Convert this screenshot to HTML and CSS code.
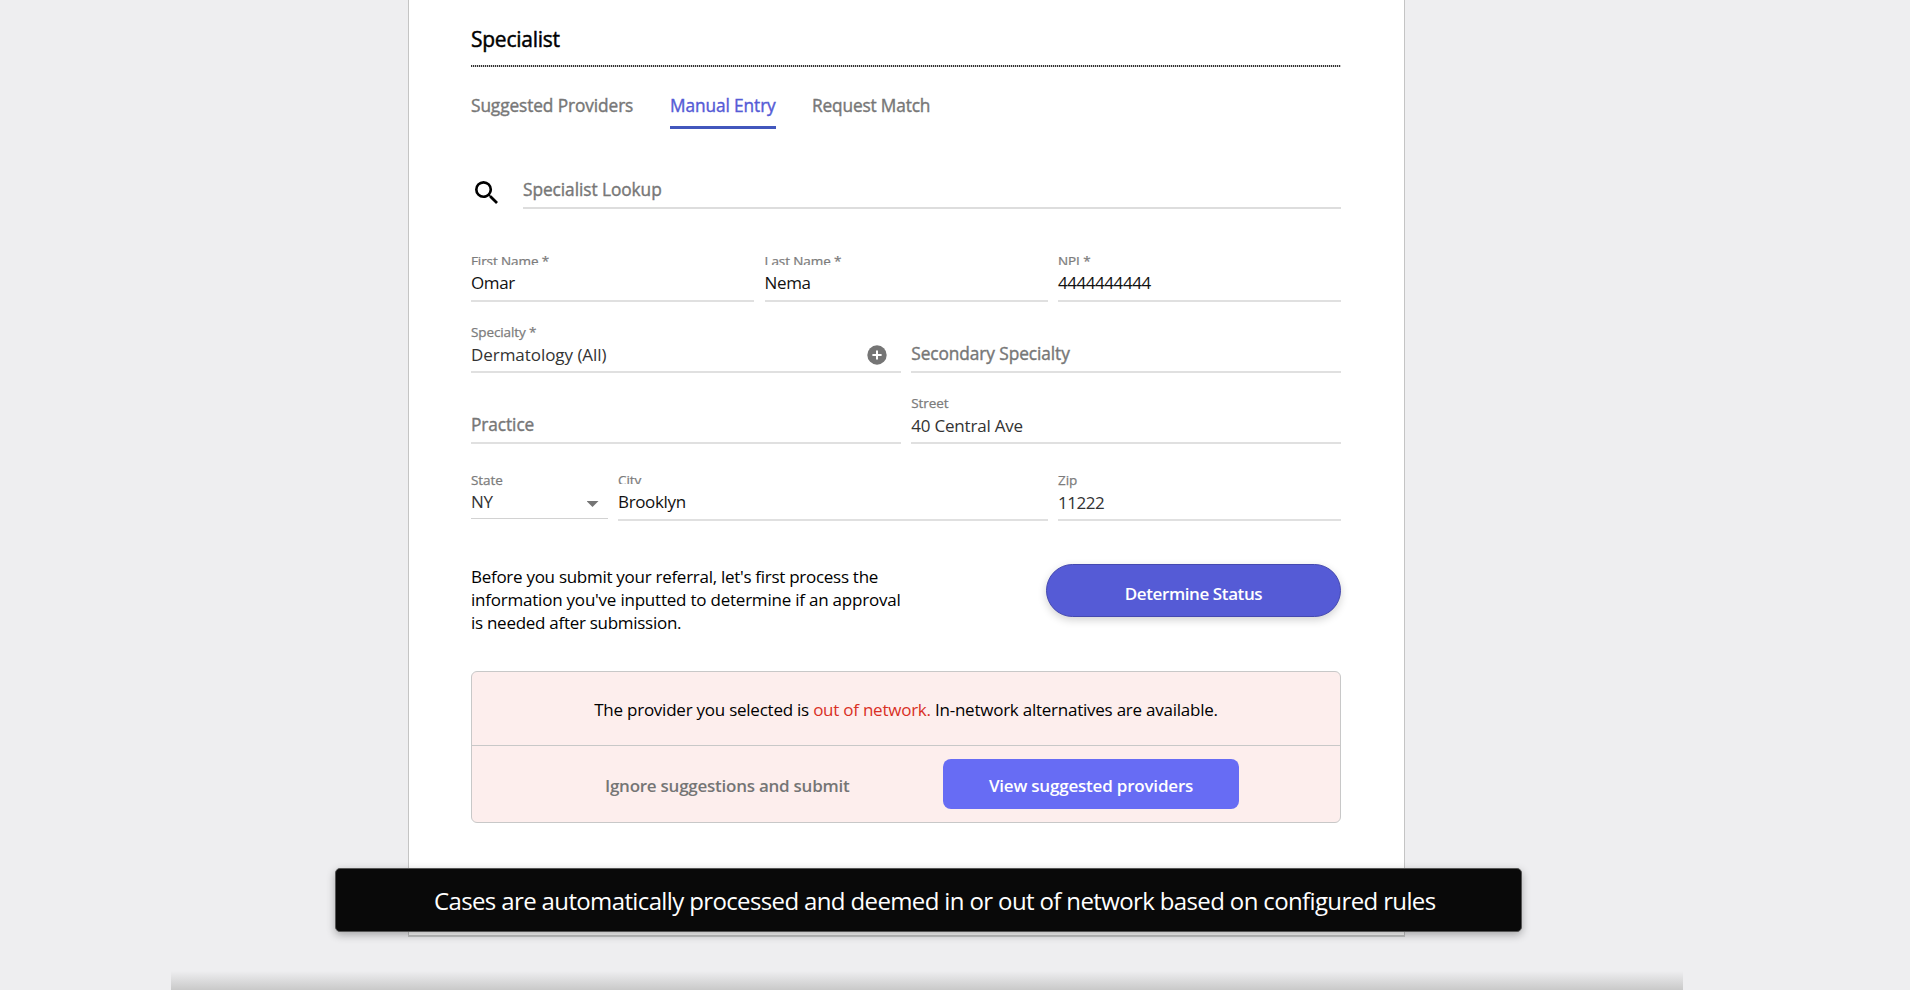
FILE: index.html
```html
<!DOCTYPE html>
<html lang="en">
<head>
<meta charset="utf-8">
<title>Specialist referral</title>
<link rel="stylesheet" href="styles.css">
</head>
<body>
<main class="card">
  <h1 class="title"><span>Specialist</span></h1>
  <nav class="tabs">
    <a class="tab tab-suggested">Suggested Providers</a>
    <a class="tab tab-manual">Manual Entry</a>
    <a class="tab tab-request">Request Match</a>
  </nav>

  <div class="lookup">
    <svg class="search-icon" viewBox="3 3 17.49 17.49"><path d="M15.5 14h-.79l-.28-.27A6.47 6.47 0 0 0 16 9.5 6.5 6.5 0 1 0 9.5 16c1.61 0 3.09-.59 4.23-1.57l.27.28v.79l5 4.99L20.49 19l-4.99-5zm-6 0a4.5 4.5 0 1 1 0-9 4.5 4.5 0 0 1 0 9z"/></svg>
    <div class="lookup-input"><span>Specialist Lookup</span></div>
  </div>

  <section class="fields">
    <div class="row thirds">
      <div class="field"><div class="label clipped">First Name *</div><div class="value">Omar</div></div>
      <div class="field"><div class="label clipped">Last Name *</div><div class="value">Nema</div></div>
      <div class="field"><div class="label clipped">NPI *</div><div class="value digits">4444444444</div></div>
    </div>
    <div class="row halves">
      <div class="field"><div class="label">Specialty *</div>
        <div class="value soft specialty"><span>Dermatology (All)</span>
          <svg class="plus-icon" viewBox="0 0 20 20"><circle cx="10" cy="10" r="9.7"/><path d="M10 5.4v9.2M5.4 10h9.2"/></svg>
        </div></div>
      <div class="field"><div class="label"></div><div class="value placeholder">Secondary Specialty</div></div>
    </div>
    <div class="row halves">
      <div class="field"><div class="label"></div><div class="value placeholder">Practice</div></div>
      <div class="field"><div class="label">Street</div><div class="value soft street">40 Central Ave</div></div>
    </div>
    <div class="row address">
      <div class="field select"><div class="label">State</div><div class="value soft"><span>NY</span><i class="caret"></i></div></div>
      <div class="field"><div class="label clipped">City</div><div class="value">Brooklyn</div></div>
      <div class="field"><div class="label">Zip</div><div class="value soft digits">11222</div></div>
    </div>
  </section>

  <section class="status">
    <p class="note"><span class="line line-a">Before you submit your referral, let's first process the</span> <span class="line line-b">information you've inputted to determine if an approval</span> <span class="line line-c">is needed after submission.</span></p>
    <button class="determine">Determine Status</button>
  </section>

  <section class="alert">
    <p class="message"><span>The provider you selected is <em>out of network.</em> In-network alternatives are available.</span></p>
    <div class="actions">
      <button class="ignore">Ignore suggestions and submit</button>
      <button class="view">View suggested providers</button>
    </div>
  </section>
</main>
<div class="banner"><span>Cases are automatically processed and deemed in or out of network based on configured rules</span></div>
<div class="bottom-shade"></div>
</body>
</html>
```

FILE: styles.css
```css
* { box-sizing: border-box; }
body {
  margin: 0;
  height: 990px;
  overflow: hidden;
  position: relative;
  background: #eeeef0;
  color: #000;
  font-family: "Segoe UI", "Open Sans", "Noto Sans", sans-serif;
}
button { font-family: inherit; border: 0; padding: 0; }
.card {
  width: 997px;
  height: 937px;
  margin-left: 408px;
  padding: 25px 63px 0 62px;
  background: #fff;
  border: 1px solid #c4c4c4;
  border-top: 0;
  border-bottom: 2px solid #c4c6c6;
}
.title {
  margin: 0;
  height: 42px;
  font-size: 21px;
  font-weight: 400;
  line-height: 29px;
  letter-spacing: -0.25px;
  -webkit-text-stroke: 0.45px currentColor;
  background: repeating-linear-gradient(90deg, #333 0 1px, #ccc 1px 2px) bottom / 100% 2px no-repeat;
}
.tabs { display: flex; gap: 36px; margin-top: 24px; height: 38px; }
.tab { height: 38px; font-size: 17.3px; font-weight: 400; line-height: 30px; color: #777; white-space: nowrap; letter-spacing: -0.1px; -webkit-text-stroke: 0.4px currentColor; }
.tab-suggested { width: 163px; }
.tab-manual { width: 106px; color: #555bd6; border-bottom: 3px solid #4257bd; }
.tab-request { width: 118px; letter-spacing: -0.16px; }
.lookup { display: flex; margin-top: 41px; height: 39px; }
.search-icon { width: 23px; height: 23px; margin: 11px 25px 0 4px; fill: #000; }
.lookup-input { flex: 1; border-bottom: 2px solid #ddd; color: #777; font-size: 17.3px; line-height: 39px; letter-spacing: -0.06px; -webkit-text-stroke: 0.4px currentColor; }
.fields { margin-top: 43px; }
.row { display: grid; column-gap: 10.5px; height: 50px; margin-bottom: 21px; }
.thirds { grid-template-columns: repeat(3, 1fr); }
.halves { grid-template-columns: 1fr 1fr; }
.address { grid-template-columns: 136.5px 429.5px 1fr; margin-top: 27px; margin-bottom: 0; }
.field { height: 50px; border-bottom: 2px solid #e0e0e0; }
.label { height: 18px; font-size: 13.5px; line-height: 18px; color: #7c7c7c; letter-spacing: -0.1px; -webkit-text-stroke: 0.25px currentColor; }
.label.clipped { height: 13px; margin-bottom: 5px; overflow: hidden; }
.value { display: flex; margin-top: 1px; height: 29px; font-size: 17px; line-height: 26px; color: #111; letter-spacing: -0.35px; }
.soft { color: #333; }
.specialty { letter-spacing: -0.05px; }
.street { letter-spacing: -0.2px; }
.digits { letter-spacing: -0.45px; }
.placeholder { color: #777; font-size: 17.3px; line-height: 24px; letter-spacing: -0.08px; -webkit-text-stroke: 0.4px currentColor; }
.plus-icon { width: 20px; height: 20px; margin: 3px 14px 0 auto; fill: #757575; stroke: #fff; stroke-width: 2; }
.plus-icon circle { stroke: none; }
.select { height: 48px; border-bottom: 1px solid #d2d2d2; }
.select .value { line-height: 24px; }
.caret { width: 12px; height: 6px; margin: 11px 9px 0 auto; background: #757575; clip-path: polygon(0 0, 100% 0, 50% 100%); }
.status { display: flex; justify-content: space-between; margin-top: 43px; }
.note { margin: 1px 0 0; font-size: 17px; line-height: 23px; }
.line { display: block; white-space: nowrap; letter-spacing: -0.28px; }
.line-b { letter-spacing: -0.22px; }
.determine { width: 295px; height: 53px; border: 1px solid #4549b0; border-radius: 26.5px; background: #555bd6; color: #fff; font-size: 17px; font-weight: 600; line-height: 50px; padding-top: 4px; letter-spacing: -0.4px; box-shadow: 0 3px 8px rgba(0,0,0,.18); }
.alert { height: 152px; margin-top: 37px; border: 1px solid #c8c8c8; border-radius: 6px; background: #fdeeed; }
.message { margin: 0; height: 74px; border-bottom: 1px solid #c8c8c8; text-align: center; font-size: 17px; line-height: 76px; white-space: nowrap; letter-spacing: -0.24px; }
.message em { color: #d93025; font-style: normal; }
.actions { display: flex; padding: 13px 101px 0 133px; justify-content: space-between; }
.ignore { height: 50px; background: none; color: #757575; font-size: 17px; font-weight: 600; line-height: 46px; padding-top: 4px; letter-spacing: -0.25px; white-space: nowrap; }
.view { width: 296px; height: 50px; border-radius: 8px; background: #676cf4; color: #fff; font-size: 17px; font-weight: 600; line-height: 46px; padding-top: 4px; letter-spacing: -0.2px; }
.banner { position: absolute; left: 335px; top: 868px; width: 1187px; height: 64px; border: 1px solid #555; border-radius: 5px; background: #090909; color: #fff; font-size: 24px; line-height: 63px; padding-left: 98px; white-space: nowrap; letter-spacing: -0.63px; box-shadow: 0 3px 8px rgba(0,0,0,.3); }
.bottom-shade { position: absolute; left: 171px; top: 971px; width: 1512px; height: 19px; background: linear-gradient(#eeeef0, #c9c9c9); }
```
